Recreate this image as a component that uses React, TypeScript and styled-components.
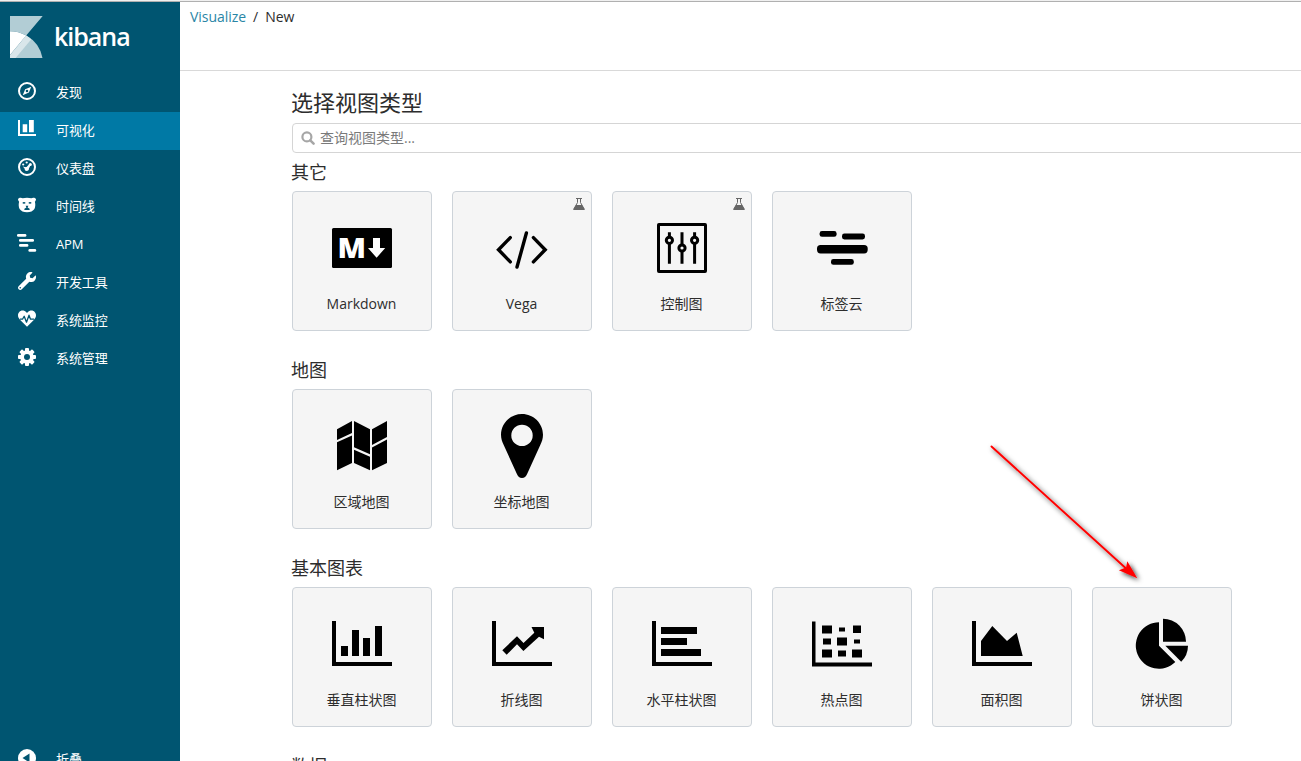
import React from 'react';
import styled, { createGlobalStyle } from 'styled-components';
import { FaWrench } from 'react-icons/fa';

const GlobalStyle = createGlobalStyle`
  *, *::before, *::after { box-sizing: border-box; }
  body {
    margin: 0;
    overflow: hidden;
    background: #fff;
    color: #2d2d2d;
    font-family: 'Open Sans', 'Noto Sans CJK SC', sans-serif;
    font-size: 14px;
  }
`;

const Page = styled.div`
  display: flex;
  height: 100vh;
  overflow: hidden;
  border-top: 1px solid #f0f0f0;
`;

const Frame = styled.div`
  display: flex;
  flex: 1;
  min-width: 0;
  border-top: 1px solid #b0b0b0;
`;

const Sidebar = styled.nav`
  display: flex;
  flex-direction: column;
  flex: 0 0 180px;
  overflow: hidden;
  background: #005571;
  color: #fff;
`;

const Brand = styled.div`
  display: flex;
  flex: 0 0 72px;
  padding: 14px 0 0 10px;
  gap: 11px;
`;

const BrandName = styled.span`
  font-size: 25px;
  font-weight: 600;
  line-height: 41px;
  letter-spacing: -1px;
`;

const NavList = styled.div`
  flex: 1;
`;

const NavItem = styled.a<{ $active?: boolean }>`
  display: flex;
  align-items: center;
  height: 38px;
  padding: 0 0 4px 17px;
  gap: 19px;
  font-size: 13px;
  line-height: 18px;
  letter-spacing: -0.1px;
  background: ${({ $active }) => ($active ? '#0079a5' : 'transparent')};

  svg {
    flex: 0 0 20px;
  }

  span {
    padding-top: 1px;
  }
`;

const CollapseItem = styled(NavItem)`
  margin-bottom: -18px;
  flex: 0 0 38px;

  span {
    padding-top: 2px;
  }
`;

const Main = styled.main`
  flex: 1;
  min-width: 0;
  overflow: hidden;
`;

const TopBar = styled.header`
  display: flex;
  gap: 7px;
  height: 69px;
  padding: 5px 10px 0;
  border-bottom: 1px solid #d9d9d9;
  line-height: 20px;
  letter-spacing: -0.04px;
`;

const Crumb = styled.span<{ $link?: boolean }>`
  color: ${({ $link }) => ($link ? '#2a86a6' : '#2d2d2d')};
`;

const Content = styled.div`
  width: 1120px;
  margin-left: 112px;
  padding-top: 19px;
`;

const Title = styled.h1`
  margin: 0 0 0 -1px;
  font-size: 22px;
  font-weight: 400;
  line-height: 24px;
  height: 33px;
`;

const SearchBox = styled.div`
  display: flex;
  align-items: center;
  gap: 5px;
  height: 30px;
  padding-left: 8px;
  border: 1px solid #d5d5d5;
  border-radius: 4px;

  input {
    flex: 1;
    border: 0;
    padding: 0;
    outline: 0;
    font: inherit;
    line-height: 20px;
  }

  input::placeholder {
    color: #7a7a7a;
    opacity: 1;
  }
`;

const Section = styled.section`
  height: 198px;
`;

const SectionTitle = styled.h2`
  margin: 0 0 0 -1px;
  height: 38px;
  padding-top: 9px;
  font-size: 18px;
  font-weight: 400;
  line-height: 20px;
`;

const CardRow = styled.div`
  display: flex;
  gap: 20px;
`;

const Card = styled.div`
  position: relative;
  display: flex;
  flex-direction: column;
  align-items: center;
  width: 140px;
  height: 140px;
  padding-top: 19px;
  border: 1px solid #cdd3d9;
  border-radius: 4px;
  background: #f5f5f5;
`;

const CardLabel = styled.span`
  margin-top: 11px;
  padding-right: 1px;
  line-height: 20px;
  white-space: nowrap;
`;

const LabBadge = styled.span`
  position: absolute;
  top: 6px;
  right: 6px;
  display: flex;
`;

const PointerArrow = styled.svg`
  position: absolute;
  left: 980px;
  top: 436px;
  pointer-events: none;
`;

const Axis = () => <path d="M40 34h4v41h56v4H40z" />;

const bar = (x: number, y: number, w: number, h: number, r = 0) => (
  <rect key={`${x}-${y}`} x={x} y={y} width={w} height={h} rx={r} />
);

const art: Record<string, React.ReactNode> = {
  markdown: (
    <>
      {bar(40, 37, 60, 40, 1.5)}
      <text
        x="45.600"
        y="66.7"
        fill="#fff"
        fontFamily="Open Sans"
        fontWeight="800"
        fontSize="27.5"
        textLength="28.500"
        lengthAdjust="spacingAndGlyphs"
      >
        M
      </text>
      <path fill="#fff" d="M81 47h7v10h5.2l-8.6 9.8L76 57h5z" />
    </>
  ),
  vega: (
    <g fill="none" stroke="#000" strokeWidth="3.4" strokeLinecap="round">
      <path d="M58.3 46.6 46.5 58.7l11.8 12.2M81.4 46.6l11.8 12.1-11.8 12.2M74.4 42l-9.4 34" />
    </g>
  ),
  controls: (
    <g fill="#f5f5f5" stroke="#000" strokeWidth="3">
      <rect x="46.5" y="33.5" width="47" height="47" rx=".4" />
      <path d="M57.4 41.3v31.4M70 41.3v31.4M82.6 41.3v31.4" />
      <circle cx="57.4" cy="49.3" r="3.1" />
      <circle cx="70" cy="57" r="3.1" />
      <circle cx="82.6" cy="49.3" r="3.1" />
    </g>
  ),
  tagCloud: (
    <>
      {bar(47.6, 40, 17, 5.8, 2.4)}
      {bar(70, 42.6, 23, 5.8, 2.4)}
      {bar(45, 54, 50.7, 8.4, 3.6)}
      {bar(59, 68, 22.8, 5.8, 2.4)}
    </>
  ),
  regionMap: (
    <path d="M45 40.3 60 32v12l-15 6.9zM45 53.3l15-6.9V74l-15 7.2zM62 32l16 8.3v25l-16-7zM62 60.7l16 7v13.6L62 74zM80 40.3 95 32v16l-15 8zM80 58.5l15-8V74l-15 7.2z" />
  ),
  mapPin: (
    <path
      fillRule="evenodd"
      d="M70 25c11.6 0 21 9.3 21 20.8 0 4-1.2 7-2.6 10L75 85.2C74 87.600 72.500 89 70 89s-4-1.400-5-3.800L51.600 55.800c-1.400-3-2.600-6-2.600-10C49 34.300 58.400 25 70 25zm0 10.700a10.700 10.700 0 1 0 0 21.400 10.700 10.700 0 0 0 0-21.400z"
    />
  ),
  verticalBar: (
    <>
      <Axis />
      {bar(49, 59, 7, 10)}
      {bar(60, 43, 7, 26)}
      {bar(71, 51, 7, 18)}
      {bar(83, 39, 7, 30)}
    </>
  ),
  line: (
    <>
      <Axis />
      <path d="M50.3 63.300 65 49.300l6.500 6.700L82.300 45.700 79.500 40H92v12.200l-5-2.400L71.400 64 65 57.300 54.700 67.700z" />
    </>
  ),
  horizontalBar: (
    <>
      <Axis />
      {bar(49, 40, 36, 7)}
      {bar(49, 51, 26, 7)}
      {bar(49, 62, 40, 7)}
    </>
  ),
  heatMap: (
    <>
      <path d="M40 34.500h3.500v41H100v4H40z" />
      {bar(50, 38.5, 10, 8)}
      {bar(67, 40.5, 6, 4)}
      {bar(81, 38.5, 8, 7.5)}
      {bar(51, 51.5, 8, 6)}
      {bar(65, 50.5, 10, 8)}
      {bar(82, 52.5, 6, 4)}
      {bar(50, 62.5, 10, 8)}
      {bar(66, 63.5, 8, 6)}
      {bar(80, 62.5, 10, 8)}
    </>
  ),
  area: (
    <>
      <Axis />
      <path d="M49 54l11.300-15L75 54l9.700-8.300 6 23.300H49z" />
    </>
  ),
  pie: (
    <>
      <path d="M67 35.300v23.400l16.300 16.300A23.200 23.200 0 1 1 67 35.300z" />
      <path d="M71 31.700a23 23 0 0 1 23 23H71z" />
      <path d="M73.300 58.700H96a22.800 22.800 0 0 1-6.800 16.100z" />
    </>
  ),
};

const FlaskIcon = () => (
  <svg width="12" height="12" viewBox="0 0 12 12">
    <path fill="none" stroke="#666" d="M4.500.5v4L1 10.900h10L7.500 4.500v-4" />
    <path fill="#666" d="M3 0h6v1H3zM3 7h6l2.800 4.200q.3.800-.6.800H.8q-.9 0-.6-.8z" />
  </svg>
);

const SearchIcon = () => (
  <svg width="14" height="14" viewBox="0 0 14 14" fill="none" stroke="#a6a6a6">
    <circle cx="5.900" cy="5.900" r="4.500" strokeWidth="2.200" />
    <path d="M9.300 9.300l3.300 3.300" strokeWidth="2.500" strokeLinecap="round" />
  </svg>
);

const CompassIcon = () => (
  <svg width="20" height="20" viewBox="0 0 20 20">
    <circle cx="10" cy="10" r="8" fill="none" stroke="#fff" strokeWidth="2" />
    <path
      fill="#fff"
      fillRule="evenodd"
      d="M14.300 5.700 11.900 11.600 5.700 14.300 8.200 8.300zM10 8.700a1.300 1.300 0 1 0 0 2.600 1.300 1.300 0 0 0 0-2.600z"
    />
  </svg>
);

const ChartIcon = () => (
  <svg width="20" height="20" viewBox="0 0 20 20" fill="#fff">
    <path d="M1 1h2v14h16v2H1zM5.700 5.300h4.500v8H5.700zM12 1h4.800v12.300H12z" />
  </svg>
);

const GaugeIcon = () => (
  <svg width="20" height="20" viewBox="0 0 20 20" fill="#fff">
    <circle cx="10" cy="10" r="8" fill="none" stroke="#fff" strokeWidth="2" />
    <circle cx="6.200" cy="7.500" r="1.100" />
    <circle cx="9.700" cy="5.500" r="1.100" />
    <circle cx="13.300" cy="7.500" r="1.500" />
    <circle cx="9.700" cy="12" r="2.100" />
    <path d="M5.800 9.500l4.700 1.200-1.300 2.600zM8.400 11.200 12.400 6.900l1.300 1-2.500 5z" />
  </svg>
);

const BearIcon = () => (
  <svg width="20" height="20" viewBox="0 0 20 20">
    <path
      fill="#fff"
      d="M1 4.300C1 2.600 4.500 2.200 5.700 3.300c2.700-.7 5.900-.7 8.600 0C15.500 2.200 19 2.600 19 4.300c0 1-.5 1.800-1.100 2.400.7 2.500.5 5.300-.5 7.300-1.300 2-4 3.300-7.400 3.300S3.900 16 2.600 14c-1-2-1.200-4.800-.5-7.300C1.500 6.100 1 5.300 1 4.300z"
    />
    <g fill="#005571">
      <ellipse cx="7" cy="7.900" rx="1.500" ry=".8" />
      <ellipse cx="13" cy="7.900" rx="1.500" ry=".8" />
      <path d="M8.600 10.800h2.800L10.600 12.600l2 1.200v1.200H7.400v-1.200l2-1.200z" />
    </g>
  </svg>
);

const ApmIcon = () => (
  <svg width="20" height="20" viewBox="0 0 20 20" fill="#fff">
    {bar(0, 1, 9.4, 2.8, 1.3)}
    {bar(2, 6, 15, 2.8, 1.3)}
    {bar(2, 11, 9.4, 2.8, 1.3)}
    {bar(11.4, 16, 7.8, 2.8, 1.3)}
  </svg>
);

const HeartbeatIcon = () => (
  <svg width="20" height="20" viewBox="0 0 20 20">
    <path
      fill="#fff"
      d="M10 4C8.500 1.800 6.800 1.500 5.500 1.500 3 1.500 1 3.700 1 6.300c0 2 .9 3.300 2.200 4.600L10 17.700l6.800-6.800C18.100 9.600 19 8.300 19 6.300c0-2.600-2-4.800-4.500-4.800C13.200 1.500 11.500 1.800 10 4z"
    />
    <path
      fill="none"
      stroke="#005571"
      strokeWidth="1.300"
      strokeLinejoin="round"
      d="M3 10.200h2.500l1.700-3 2.300 6 2.500-7 1.500 4H17"
    />
  </svg>
);

const GearIcon = () => (
  <svg width="20" height="20" viewBox="0 0 20 20">
    <g fill="#fff">
      {[0, 45, 90, 135].map((angle) => (
        <rect
          key={angle}
          x="8"
          y="1"
          width="4"
          height="18"
          rx=".9"
          transform={`rotate(${angle} 10 10)`}
        />
      ))}
      <circle cx="10" cy="10" r="6.800" />
    </g>
    <circle cx="10" cy="10" r="3" fill="#005571" />
  </svg>
);

const CollapseIcon = () => (
  <svg width="20" height="20" viewBox="0 0 20 20">
    <circle cx="10" cy="10" r="9" fill="#fff" />
    <path fill="#005571" d="M5.500 10 12.500 5.500v9z" />
  </svg>
);

const LogoMark = () => (
  <svg width="33" height="42" viewBox="0 0 33 42">
    <path fill="#b2cdd5" d="M0 0h32.700L16.200 19.600A32.800 32.800 0 0 0 0 15.300z" />
    <path fill="#b2cdd5" d="M16.200 19.600A32.800 32.800 0 0 1 32.500 42H0z" />
    <path fill="#d9e6ea" d="M16.200 19.600q2.700 1.500 5.100 3.600L5.600 42H0v-3z" />
    <path fill="#fff" d="M0 15.300a32.800 32.800 0 0 1 16.200 4.300L0 39z" />
  </svg>
);

const navItems = [
  { label: '发现', icon: <CompassIcon /> },
  { label: '可视化', icon: <ChartIcon />, active: true },
  { label: '仪表盘', icon: <GaugeIcon /> },
  { label: '时间线', icon: <BearIcon /> },
  { label: 'APM', icon: <ApmIcon /> },
  { label: '开发工具', icon: <FaWrench size={18} /> },
  { label: '系统监控', icon: <HeartbeatIcon /> },
  { label: '系统管理', icon: <GearIcon /> },
];

type ChartType = { label: string; icon: string; lab?: boolean };

const sections: { title: string; items: ChartType[] }[] = [
  {
    title: '其它',
    items: [
      { label: 'Markdown', icon: 'markdown' },
      { label: 'Vega', icon: 'vega', lab: true },
      { label: '控制图', icon: 'controls', lab: true },
      { label: '标签云', icon: 'tagCloud' },
    ],
  },
  {
    title: '地图',
    items: [
      { label: '区域地图', icon: 'regionMap' },
      { label: '坐标地图', icon: 'mapPin' },
    ],
  },
  {
    title: '基本图表',
    items: [
      { label: '垂直柱状图', icon: 'verticalBar' },
      { label: '折线图', icon: 'line' },
      { label: '水平柱状图', icon: 'horizontalBar' },
      { label: '热点图', icon: 'heatMap' },
      { label: '面积图', icon: 'area' },
      { label: '饼状图', icon: 'pie' },
    ],
  },
  { title: '数据', items: [] },
];

export default function App() {
  return (
    <Page>
      <GlobalStyle />
      <Frame>
        <Sidebar>
          <Brand>
            <LogoMark />
            <BrandName>kibana</BrandName>
          </Brand>
          <NavList>
            {navItems.map(({ label, icon, active }) => (
              <NavItem key={label} $active={active}>
                {icon}
                <span>{label}</span>
              </NavItem>
            ))}
          </NavList>
          <CollapseItem>
            <CollapseIcon />
            <span>折叠</span>
          </CollapseItem>
        </Sidebar>
        <Main>
          <TopBar>
            <Crumb $link>Visualize</Crumb>
            <Crumb>/</Crumb>
            <Crumb>New</Crumb>
          </TopBar>
          <Content>
            <Title>选择视图类型</Title>
            <SearchBox>
              <SearchIcon />
              <input placeholder="查询视图类型..." />
            </SearchBox>
            {sections.map((section) => (
              <Section key={section.title}>
                <SectionTitle>{section.title}</SectionTitle>
                <CardRow>
                  {section.items.map((item) => (
                    <Card key={item.label}>
                      {item.lab && (
                        <LabBadge>
                          <FlaskIcon />
                        </LabBadge>
                      )}
                      <svg width="72" height="72" viewBox="34 20 72 72">
                        {art[item.icon]}
                      </svg>
                      <CardLabel>{item.label}</CardLabel>
                    </Card>
                  ))}
                </CardRow>
              </Section>
            ))}
          </Content>
        </Main>
      </Frame>
      <PointerArrow width="170" height="155" viewBox="980 436 170 155">
        <defs>
          <filter id="arrow-shadow" x="-20%" y="-20%" width="140%" height="140%">
            <feDropShadow dx="2" dy="2" stdDeviation="2.500" floodColor="#000" floodOpacity=".8" />
          </filter>
        </defs>
        <g filter="url(#arrow-shadow)" fill="#f00">
          <path d="M991.500 446.500 1125.300 567.800" stroke="#f00" strokeWidth="1.900" strokeLinecap="round" />
          <path d="M1137.300 578.300l-10-17-1.200 6.200-7.200 2.700z" />
        </g>
      </PointerArrow>
    </Page>
  );
}
